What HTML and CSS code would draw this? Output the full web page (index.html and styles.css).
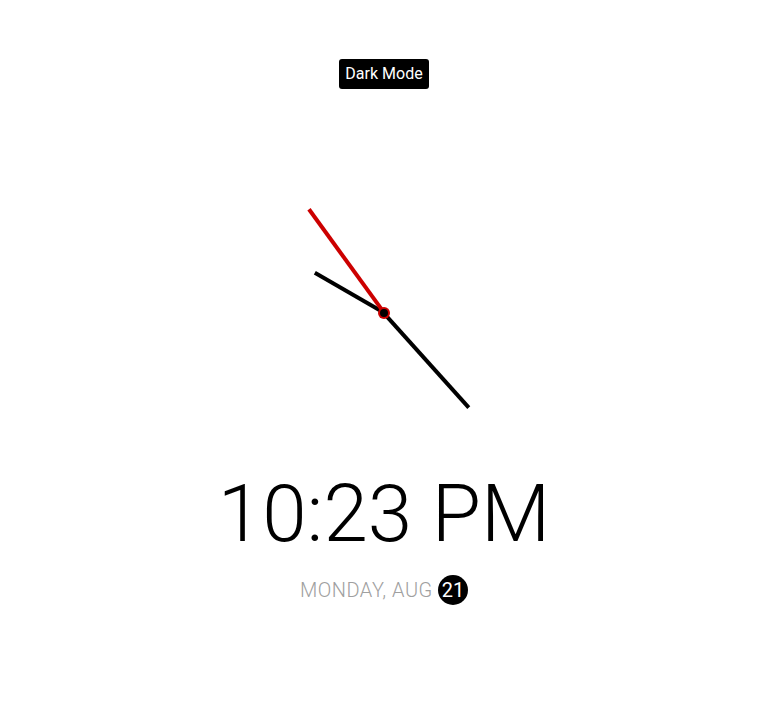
FILE: index.html
```html
<!DOCTYPE html>
<html lang="en">
<head>
<meta charset="utf-8">
<title>Theme Clock</title>
<link rel="stylesheet" href="styles.css">
</head>
<body>
<main class="page">
  <button class="toggle" type="button">Dark Mode</button>
  <div class="clock-container">
    <div class="clock">
      <div class="needle hour" style="--deg: 300deg"></div>
      <div class="needle minute" style="--deg: 138deg"></div>
      <div class="needle second" style="--deg: 324deg"></div>
      <div class="center-point"></div>
    </div>
    <div class="time">10:23 PM</div>
    <div class="date">Monday, Aug <span class="circle">21</span></div>
  </div>
</main>
</body>
</html>
```

FILE: styles.css
```css
* {
  box-sizing: border-box;
}

html, body {
  margin: 0;
  background: #fff;
}

body {
  font-family: Roboto, "Liberation Sans", sans-serif;
  font-weight: 300;
  color: #000;
  overflow: hidden;
}

.page {
  height: 704px;
  display: flex;
  flex-direction: column;
  align-items: center;
  padding-top: 59px;
  padding-left: 10px;
}

.toggle {
  font-family: Roboto, "Liberation Sans", sans-serif;
  font-weight: 400;
  font-size: 16px;
  line-height: 18px;
  background: #000;
  color: #fff;
  border: 0;
  border-radius: 3px;
  padding: 6px 6px;
  height: 30px;
  width: 90px;
  cursor: pointer;
}

.clock-container {
  display: flex;
  flex-direction: column;
  align-items: center;
}

.clock {
  position: relative;
  width: 254px;
  height: 254px;
  margin-top: 97px;
}

.needle {
  position: absolute;
  top: 50%;
  left: 50%;
  width: 3.5px;
  height: 80px;
  background: #000;
  transform-origin: bottom center;
  transform: translate(-50%, -100%) rotate(var(--deg));
}

.needle.minute {
  height: 127px;
}

.needle.second {
  height: 128px;
  background: #cc0000;
}

.center-point {
  position: absolute;
  top: 50%;
  left: 50%;
  width: 12px;
  height: 12px;
  border-radius: 50%;
  background: #cc0000;
  transform: translate(-50%, -50%);
}

.center-point::after {
  content: "";
  position: absolute;
  top: 50%;
  left: 50%;
  width: 8px;
  height: 8px;
  border-radius: 50%;
  background: #000;
  transform: translate(-50%, -50%);
}

.time {
  margin-top: 27px;
  font-size: 80px;
  line-height: 94px;
  font-weight: 300;
}

.date {
  margin-top: 14px;
  font-size: 20px;
  color: #a0a0a0;
  letter-spacing: 0.5px;
  text-transform: uppercase;
  font-weight: 300;
}

.circle {
  display: inline-flex;
  align-items: center;
  justify-content: center;
  width: 30px;
  height: 30px;
  line-height: 30px;
  border-radius: 50%;
  background: #000;
  color: #fff;
  font-size: 20px;
  font-weight: 400;
  letter-spacing: 0;
}
```
